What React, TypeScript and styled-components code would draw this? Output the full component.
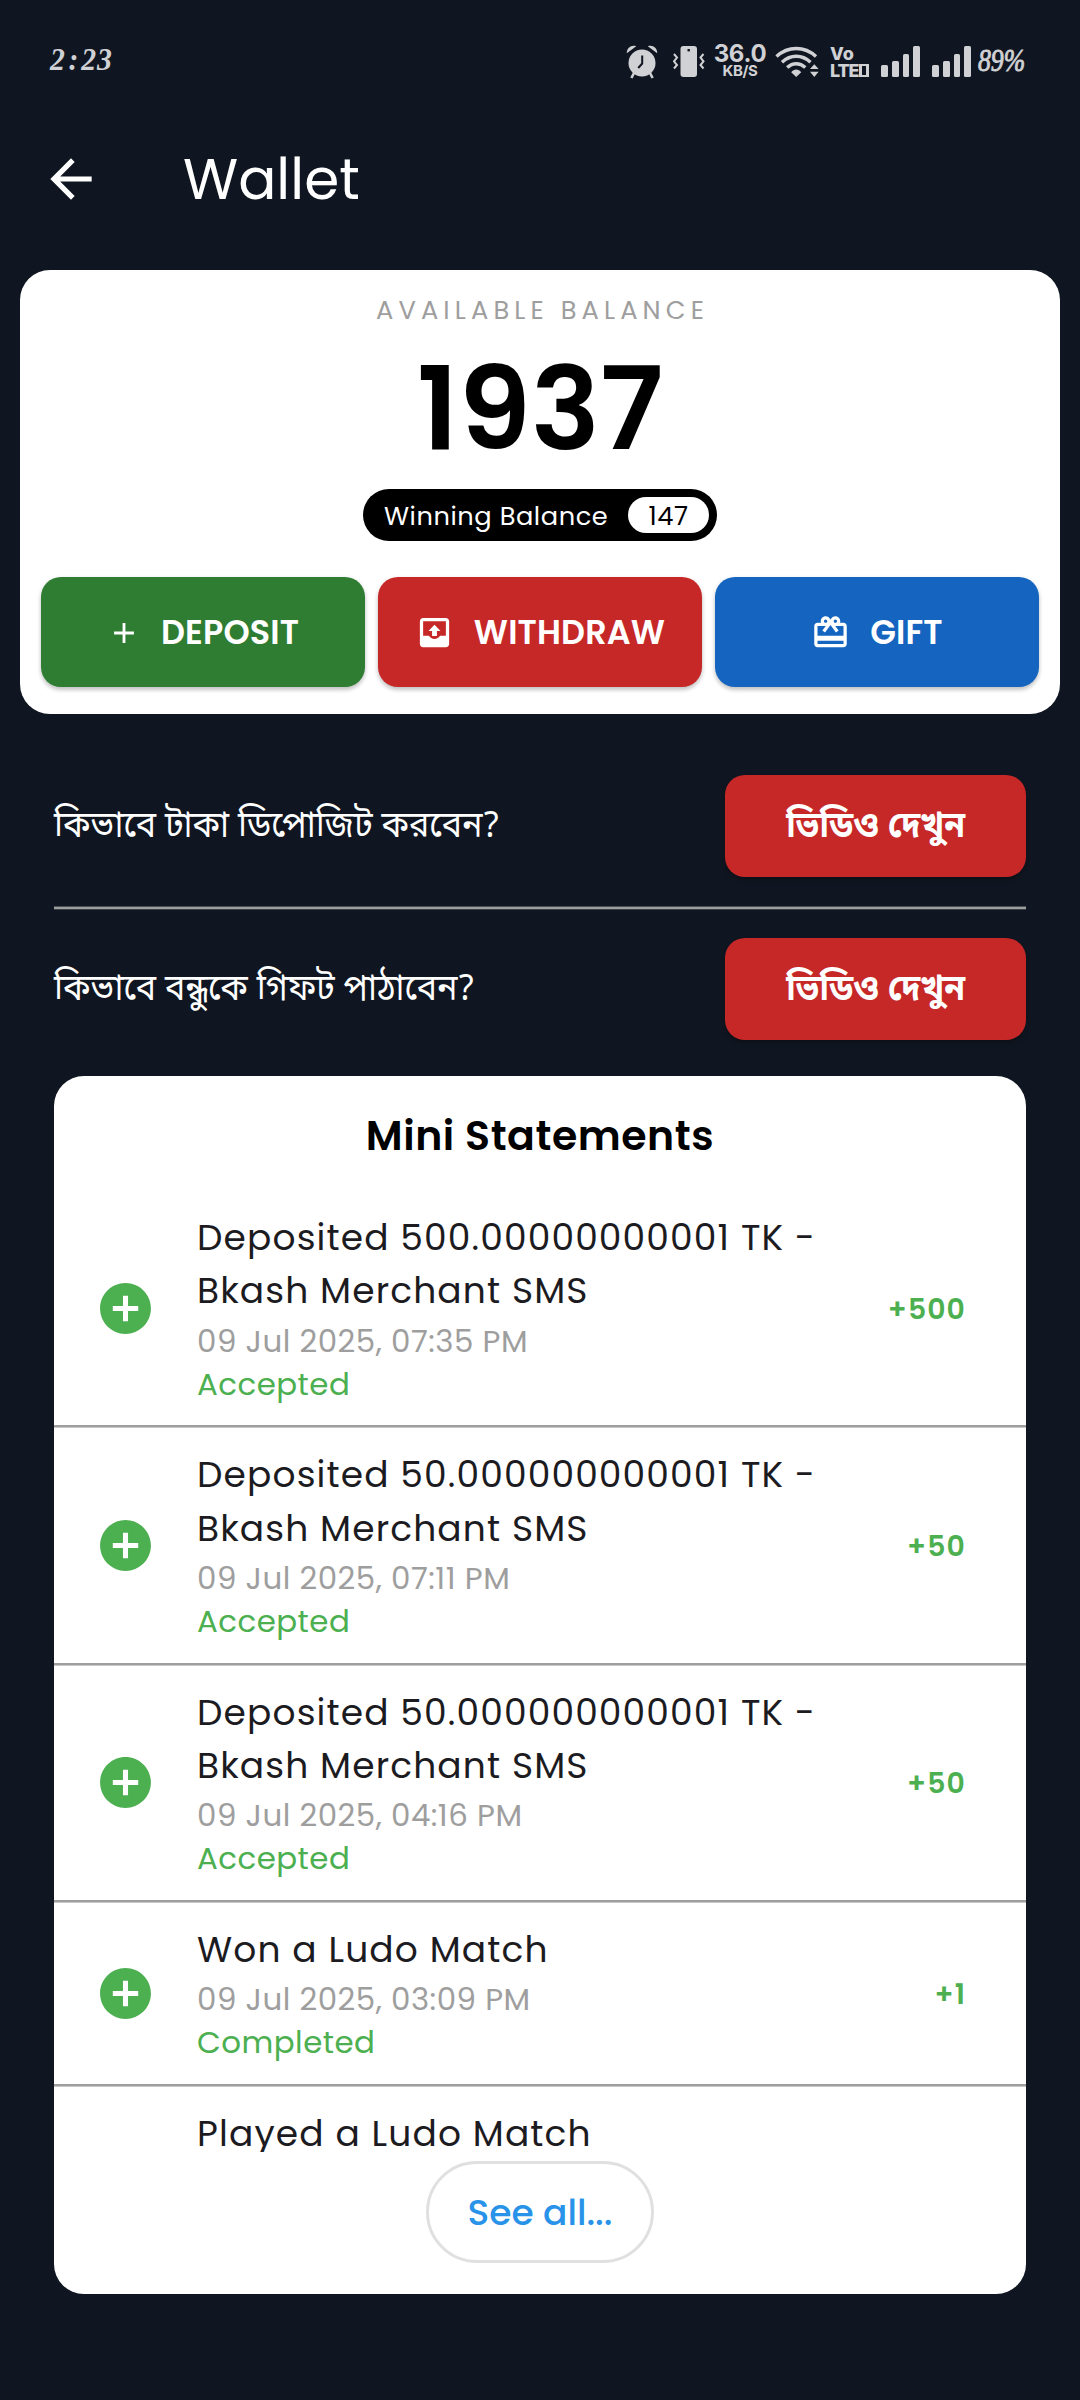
import React from "react";
import styled, { createGlobalStyle } from "styled-components";

const bodyFont = '"Poppins", "Inter", "Open Sans", sans-serif';
const bengaliFont = '"Noto Sans Bengali", "Noto Sans", sans-serif';
const statusFont = '"Inter", "Roboto", sans-serif';
const scriptFont = '"Liberation Serif", serif';

const color = {
  page: "#101621",
  status: "#d0d1d4",
  white: "#ffffff",
  ink: "#1c1b1f",
  grey: "#9e9e9e",
  green: "#4caf50",
  deepGreen: "#2e7d32",
  red: "#c62828",
  blue: "#1565c0",
  link: "#2893e8",
};

const GlobalStyle = createGlobalStyle`
  * { box-sizing: border-box; }
  body { margin: 0; background: ${color.page}; font-family: ${bodyFont}; }
  button { border: 0; margin: 0; font-family: inherit; cursor: pointer; }
  svg { display: block; flex: none; }
`;

const Screen = styled.main`
  display: flex;
  flex-direction: column;
  width: 1080px;
  height: 2400px;
  overflow: hidden;
  background: ${color.page};
`;

/* Status bar */

const StatusBar = styled.header`
  display: flex;
  align-items: flex-start;
  justify-content: space-between;
  height: 100px;
  padding: 45px 55px 0 50px;
  color: ${color.status};
`;

const Clock = styled.span`
  margin-top: -1px;
  font: italic 700 32px/30px ${scriptFont};
  letter-spacing: 1px;
  transform: scaleX(0.93);
  transform-origin: left center;
`;

const ClockColon = styled.span`
  margin: 0 2px 0 3px;
`;

const StatusIcons = styled.div`
  display: flex;
  align-items: flex-start;
`;

const NetSpeed = styled.div`
  display: flex;
  flex-direction: column;
  align-items: center;
  width: 50px;
  margin: 0 10px 0 10px;
  font-family: ${statusFont};
  font-weight: 700;
`;

const SpeedValue = styled.span`
  font-size: 24px;
  line-height: 18px;
  letter-spacing: -0.3px;
`;

const SpeedUnit = styled.span`
  font-size: 15px;
  line-height: 16px;
  letter-spacing: -0.3px;
`;

const VolteBadge = styled.div`
  display: flex;
  flex-direction: column;
  width: 39px;
  margin: 0 12px 0 11px;
  font-family: ${statusFont};
  font-weight: 800;
`;

const VolteTop = styled.span`
  font-size: 18px;
  line-height: 18px;
`;

const VolteBottom = styled.span`
  display: flex;
  align-items: center;
  gap: 1px;
  font-size: 18px;
  line-height: 15px;
  letter-spacing: -1.1px;
`;

const SimBox = styled.i`
  width: 10px;
  height: 13px;
  border: solid ${color.status};
  border-width: 2px 3px;
`;

const Bars = styled.div`
  display: flex;
  align-items: flex-end;
  gap: 4px;
  height: 32px;
  margin-right: 12px;
`;

const Bar = styled.i<{ $h: number }>`
  width: 6.75px;
  height: ${(p) => p.$h}px;
  border-radius: 1.5px;
  background: ${color.status};
`;

const BatteryLevel = styled.span`
  width: 47px;
  margin: 1px 0 0 -5px;
  font: italic 400 31px/30px ${scriptFont};
  -webkit-text-stroke: 0.9px ${color.status};
  white-space: nowrap;
  transform: scaleX(0.83);
  transform-origin: left center;
`;

/* App bar */

const AppBar = styled.div`
  display: flex;
  align-items: center;
  height: 160px;
  padding: 0 40px 2px;
  gap: 77px;
`;

const PageTitle = styled.h1`
  margin: 0;
  padding: 1px 0 0 4px;
  font-size: 56.5px;
  font-weight: 400;
  line-height: 80px;
  color: ${color.white};
`;

/* Balance card */

const BalanceCard = styled.section`
  display: flex;
  flex-direction: column;
  align-items: center;
  height: 444px;
  margin: 10px 20px 0;
  padding: 20px 21px 27px;
  border-radius: 30px;
  background: ${color.white};
`;

const BalanceLabel = styled.div`
  padding-left: 5px;
  font-size: 25.7px;
  line-height: 40px;
  letter-spacing: 5.1px;
  color: ${color.grey};
`;

const BalanceValue = styled.div`
  margin-top: 1px;
  font-size: 115.5px;
  font-weight: 600;
  line-height: 155px;
  color: #000;
`;

const WinningPill = styled.div`
  display: flex;
  align-items: center;
  justify-content: space-between;
  width: 354px;
  height: 52px;
  margin-top: 3px;
  padding: 0 8px 0 21px;
  border-radius: 26px;
  background: #000;
  color: ${color.white};
  font-size: 25.7px;
  line-height: 36px;
  letter-spacing: 0.55px;
`;

const WinningLabel = styled.span`
  padding-top: 1px;
`;

const WinningAmount = styled.span`
  width: 81px;
  height: 36px;
  border-radius: 18px;
  background: ${color.white};
  color: #000;
  line-height: 38px;
  text-align: center;
`;

const Actions = styled.div`
  display: grid;
  grid-template-columns: repeat(3, 1fr);
  gap: 13px;
  width: 100%;
  margin-top: 36px;
`;

const ActionButton = styled.button<{ $bg: string }>`
  display: flex;
  align-items: center;
  justify-content: center;
  gap: 20px;
  height: 110px;
  padding: 1px 0 0;
  border-radius: 20px;
  background: ${(p) => p.$bg};
  box-shadow: 0 3px 4px rgba(0, 0, 0, 0.2), 0 1px 5px rgba(0, 0, 0, 0.08);
  color: ${color.white};
  font-size: 33.4px;
  font-weight: 600;
  letter-spacing: 0.15px;
`;

/* Help rows */

const HelpSection = styled.section`
  display: flex;
  flex-direction: column;
  margin: 61px 54px 0;
`;

const HelpRow = styled.div`
  display: flex;
  align-items: center;
  justify-content: space-between;
  height: 102px;
`;

const HelpText = styled.span`
  padding-top: 4px;
  font-family: ${bengaliFont};
  font-size: 36px;
  line-height: 50px;
  white-space: nowrap;
  color: ${color.white};
  transform: scaleX(0.946);
  transform-origin: left center;
`;

const VideoButton = styled.button`
  width: 301px;
  height: 102px;
  padding: 3px 0 0;
  border-radius: 20px;
  background: ${color.red};
  box-shadow: 0 3px 4px rgba(0, 0, 0, 0.3);
  color: ${color.white};
  font-family: ${bengaliFont};
  font-size: 36px;
  font-weight: 700;
`;

const VideoLabel = styled.span`
  display: inline-block;
  transform: scaleX(0.934);
`;

const HelpDivider = styled.hr`
  width: 100%;
  height: 4px;
  margin: 29px 0 28px;
  border: 0;
  background: linear-gradient(#4a4e55 0 1px, ${color.grey} 1px 3px, #3c4048 3px 4px);
`;

/* Statements */

const StatementCard = styled.section`
  display: flex;
  flex-direction: column;
  align-items: center;
  height: 1218px;
  margin: 36px 54px 0;
  border-radius: 30px;
  background: ${color.white};
`;

const StatementTitle = styled.h2`
  height: 115px;
  margin: 0;
  padding-top: 4px;
  font-size: 41px;
  font-weight: 600;
  line-height: 111px;
  letter-spacing: 0.55px;
  color: #000;
`;

const StatementList = styled.div`
  width: 100%;
  height: 961px;
  overflow: hidden;
`;

const StatementRow = styled.article`
  display: flex;
  align-items: center;
  padding: 20px 60px 20px 41px;

  & + & {
    padding-top: 23px;
    background: linear-gradient(${color.grey} 0 2px, #c8c8c8 2px 3px, transparent 3px) top / 100% 3px no-repeat;
  }
`;

const RowIcon = styled.div`
  display: flex;
  width: 61px;
  margin-right: 41px;
`;

const Details = styled.div`
  width: 640px;
`;

const Description = styled.div`
  font-size: 36px;
  line-height: 53.4px;
  letter-spacing: 1.12px;
  color: ${color.ink};
`;

const DateLine = styled.div`
  margin-top: 2px;
  font-size: 30.9px;
  line-height: 43px;
  letter-spacing: 0.48px;
  color: ${color.grey};
`;

const StatusLine = styled.div`
  margin-bottom: -0.5px;
  font-size: 30.9px;
  line-height: 43px;
  letter-spacing: 0.45px;
  color: ${color.green};
`;

const Amount = styled.div`
  flex: 1;
  padding-top: 2px;
  font-size: 28.3px;
  font-weight: 600;
  letter-spacing: 1.1px;
  text-align: right;
  white-space: nowrap;
  color: ${color.green};
`;

const SeeAllButton = styled.button`
  width: 228px;
  height: 102px;
  margin-top: 9px;
  padding: 0;
  border: 3px solid #e0e0e0;
  border-radius: 51px;
  background: ${color.white};
  color: ${color.link};
  font-size: 36px;
  font-weight: 500;
`;

/* Icons */

const AlarmIcon = () => (
  <svg width="32" height="34" viewBox="0 0 32 34">
    <g fill={color.status}>
      <circle cx="16" cy="18" r="13.5" />
      <path d="M.8 8.200C.6 3 5.400-.6 10.200 1.200z" />
      <path d="M31.200 8.200C31.400 3 26.600-.6 21.800 1.200z" />
    </g>
    <path d="M8 28l-2.600 5M24 28l2.600 5" stroke={color.status} strokeWidth="2.600" />
    <path d="M16.200 10.500v8l-4 4.500" fill="none" stroke={color.page} strokeWidth="2" />
  </svg>
);

const VibrateSvg = styled.svg`
  margin-left: 15px;
`;

const VibrateIcon = () => (
  <VibrateSvg width="32" height="34" viewBox="0 0 32 34">
    <rect x="7.500" y="1" width="16.500" height="31" rx="3" fill={color.status} />
    <rect x="14.500" y="4" width="2.400" height="2.400" fill={color.page} />
    <path
      d="M1 9l3 3.500-3 3.800 3 3.700-3 3.500M30.500 9l-3 3.500 3 3.800-3 3.700 3 3.500"
      fill="none"
      stroke={color.status}
      strokeWidth="2"
    />
  </VibrateSvg>
);

const WifiIcon = () => (
  <svg width="44" height="34" viewBox="0 0 44 34">
    <g fill="none" stroke={color.status} strokeWidth="3.400">
      <path d="M1.500 11.500C13 .8 29.500.8 41 11.500" />
      <path d="M7 17.200c8.500-8 20-8 28.500 0" />
      <path d="M12.200 22.600c5.500-5.200 12.600-5.200 18.100 0" />
    </g>
    <g fill={color.status}>
      <path d="M16.200 27.200c2.800-3.600 7.200-3.600 10 0L21.200 32z" />
      <path d="M35 24l4.300-4.800 4.300 4.800zM35 26.800h8.600L39.300 32z" />
    </g>
  </svg>
);

const BackIcon = () => (
  <svg width="62" height="62" viewBox="0 0 24 24" fill={color.white}>
    <path d="M20 11H7.830l5.590-5.590L12 4l-8 8 8 8 1.410-1.410L7.830 13H20v-2z" />
  </svg>
);

const PlusIcon = () => (
  <svg width="34" height="34" viewBox="0 0 24 24" fill={color.white}>
    <path d="M19 13h-6v6h-2v-6H5v-2h6V5h2v6h6v2z" />
  </svg>
);

const OutboxIcon = () => (
  <svg width="39" height="39" viewBox="0 0 24 24" fill={color.white} fillRule="evenodd">
    <path d="M19 3H5c-1.100 0-2 .9-2 2v14c0 1.100.9 2 2 2h14c1.100 0 2-.9 2-2V5c0-1.100-.9-2-2-2zm0 11h-3.560c-.69 1.190-1.970 2-3.440 2s-2.750-.81-3.440-2H5V5h14v9z" />
    <path d="M8.300 11h2.200v3.200h3V11h2.200L12 7.200z" />
  </svg>
);

const GiftIcon = () => (
  <svg width="39" height="39" viewBox="0 0 24 24" fill={color.white}>
    <path d="M20 6h-2.180c.11-.31.18-.65.18-1 0-1.660-1.340-3-3-3-1.050 0-1.960.54-2.500 1.350l-.5.67-.5-.68C10.960 2.540 10.050 2 9 2 7.340 2 6 3.340 6 5c0 .35.070.69.180 1H4c-1.110 0-1.990.89-1.990 2L2 19c0 1.110.89 2 2 2h16c1.110 0 2-.89 2-2V8c0-1.110-.89-2-2-2zm-5-2c.55 0 1 .45 1 1s-.45 1-1 1-1-.45-1-1 .45-1 1-1zM9 4c.55 0 1 .45 1 1s-.45 1-1 1-1-.45-1-1 .45-1 1-1zm11 15H4v-2h16v2zm0-5H4V8h5.080L7 10.830 8.620 12 11 8.760l1-1.360 1 1.360L15.380 12 17 10.830 14.920 8H20v6z" />
  </svg>
);

const AddCircleIcon = () => (
  <svg width="61" height="61" viewBox="0 0 24 24" fill={color.green}>
    <path d="M12 2C6.480 2 2 6.480 2 12s4.480 10 10 10 10-4.480 10-10S17.520 2 12 2zm5 11h-4v4h-2v-4H7v-2h4V7h2v4h4v2z" />
  </svg>
);

const SignalBars = () => (
  <Bars>
    {[12, 16, 23.5, 31].map((h) => (
      <Bar key={h} $h={h} />
    ))}
  </Bars>
);

interface Statement {
  id: number;
  text: string;
  date?: string;
  status?: string;
  amount?: string;
}

const statements: Statement[] = [
  { id: 1, text: "Deposited 500.00000000001 TK - Bkash Merchant SMS", date: "09 Jul 2025, 07:35 PM", status: "Accepted", amount: "+500" },
  { id: 2, text: "Deposited 50.000000000001 TK - Bkash Merchant SMS", date: "09 Jul 2025, 07:11 PM", status: "Accepted", amount: "+50" },
  { id: 3, text: "Deposited 50.000000000001 TK - Bkash Merchant SMS", date: "09 Jul 2025, 04:16 PM", status: "Accepted", amount: "+50" },
  { id: 4, text: "Won a Ludo Match", date: "09 Jul 2025, 03:09 PM", status: "Completed", amount: "+1" },
  { id: 5, text: "Played a Ludo Match" },
];

const questions = ["কিভাবে টাকা ডিপোজিট করবেন?", "কিভাবে বন্ধুকে গিফট পাঠাবেন?"];

export default function App() {
  return (
    <Screen>
      <GlobalStyle />
      <StatusBar>
        <Clock>
          2<ClockColon>:</ClockColon>23
        </Clock>
        <StatusIcons>
          <AlarmIcon />
          <VibrateIcon />
          <NetSpeed>
            <SpeedValue>36.0</SpeedValue>
            <SpeedUnit>KB/S</SpeedUnit>
          </NetSpeed>
          <WifiIcon />
          <VolteBadge>
            <VolteTop>Vo</VolteTop>
            <VolteBottom>
              LTE
              <SimBox />
            </VolteBottom>
          </VolteBadge>
          <SignalBars />
          <SignalBars />
          <BatteryLevel>89%</BatteryLevel>
        </StatusIcons>
      </StatusBar>

      <AppBar>
        <BackIcon />
        <PageTitle>Wallet</PageTitle>
      </AppBar>

      <BalanceCard>
        <BalanceLabel>AVAILABLE BALANCE</BalanceLabel>
        <BalanceValue>1937</BalanceValue>
        <WinningPill>
          <WinningLabel>Winning Balance</WinningLabel>
          <WinningAmount>147</WinningAmount>
        </WinningPill>
        <Actions>
          <ActionButton $bg={color.deepGreen}>
            <PlusIcon />
            DEPOSIT
          </ActionButton>
          <ActionButton $bg={color.red}>
            <OutboxIcon />
            WITHDRAW
          </ActionButton>
          <ActionButton $bg={color.blue}>
            <GiftIcon />
            GIFT
          </ActionButton>
        </Actions>
      </BalanceCard>

      <HelpSection>
        {questions.map((question, i) => (
          <React.Fragment key={question}>
            {i > 0 && <HelpDivider />}
            <HelpRow>
              <HelpText>{question}</HelpText>
              <VideoButton>
                <VideoLabel>ভিডিও দেখুন</VideoLabel>
              </VideoButton>
            </HelpRow>
          </React.Fragment>
        ))}
      </HelpSection>

      <StatementCard>
        <StatementTitle>Mini Statements</StatementTitle>
        <StatementList>
          {statements.map((s) => (
            <StatementRow key={s.id}>
              <RowIcon>{s.amount && <AddCircleIcon />}</RowIcon>
              <Details>
                <Description>{s.text}</Description>
                {s.date && <DateLine>{s.date}</DateLine>}
                {s.status && <StatusLine>{s.status}</StatusLine>}
              </Details>
              {s.amount && <Amount>{s.amount}</Amount>}
            </StatementRow>
          ))}
        </StatementList>
        <SeeAllButton>See all...</SeeAllButton>
      </StatementCard>
    </Screen>
  );
}
